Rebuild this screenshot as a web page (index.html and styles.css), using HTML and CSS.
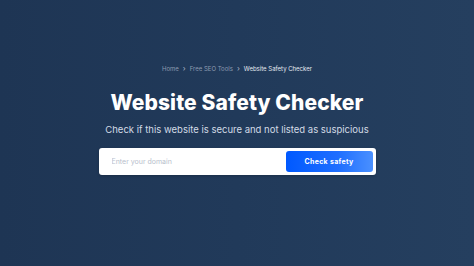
FILE: index.html
```html
<!DOCTYPE html>
<html lang="en">
<head>
    <meta charset="UTF-8">
    <meta name="viewport" content="width=device-width, initial-scale=1.0">
    <title>Website Safety Checker</title>
    <link rel="stylesheet" href="styles.css">
</head>
<body>
    <div class="hero">
        <div class="crumbs">
            <span class="crumb">Home</span>
            <span class="sep">&rsaquo;</span>
            <span class="crumb">Free SEO Tools</span>
            <span class="sep">&rsaquo;</span>
            <span class="crumb current">Website Safety Checker</span>
        </div>
        <h1 class="title">Website Safety Checker</h1>
        <p class="subtitle">Check if this website is secure and not listed as suspicious</p>
        <form class="search" onsubmit="return false">
            <input class="domain" type="text" placeholder="Enter your domain">
            <button class="check-btn" type="submit">Check safety</button>
        </form>
    </div>
</body>
</html>
```

FILE: styles.css
```css
body {
    margin: 0;
    height: 266px;
    font-family: Inter, "Open Sans", sans-serif;
    background: linear-gradient(90deg, #1e3554 0%, #213a5a 50%, #253f5f 100%);
    color: #fff;
    overflow: hidden;
}
.hero {
    display: flex;
    flex-direction: column;
    align-items: center;
    padding-top: 63px;
}
.crumbs {
    display: flex;
    align-items: center;
    gap: 4px;
    font-size: 6px;
    color: #8d9bb0;
    height: 11px;
}
.crumbs .sep {
    font-size: 7.5px;
    line-height: 7px;
    padding-bottom: 1px;
    color: #a9b4c4;
}
.crumbs .current {
    color: #e4e9f0;
}
.title {
    margin: 15px 0 0;
    font-size: 21px;
    font-weight: 800;
    line-height: 28px;
    letter-spacing: 0.1px;
}
.subtitle {
    margin: 6px 0 0;
    font-size: 9.5px;
    line-height: 13px;
    color: #d3dbe6;
}
.search {
    display: flex;
    align-items: center;
    width: 271px;
    height: 21px;
    margin-top: 12px;
    padding: 3px;
    background: #fff;
    border-radius: 3px;
    box-shadow: 0 1px 3px rgba(0, 0, 0, 0.2);
}
.domain {
    flex: 1;
    border: none;
    outline: none;
    padding: 0 0 0 10px;
    font-family: inherit;
    font-size: 7px;
    color: #333;
    background: transparent;
}
.domain::placeholder {
    color: #b8c0cc;
}
.check-btn {
    width: 87px;
    height: 21px;
    border: none;
    border-radius: 3px;
    background: linear-gradient(90deg, #0059ff 0%, #1f6fff 60%, #4a90ff 100%);
    color: #fff;
    font-family: inherit;
    font-size: 7px;
    font-weight: 700;
    letter-spacing: 0.3px;
    cursor: pointer;
}
```
